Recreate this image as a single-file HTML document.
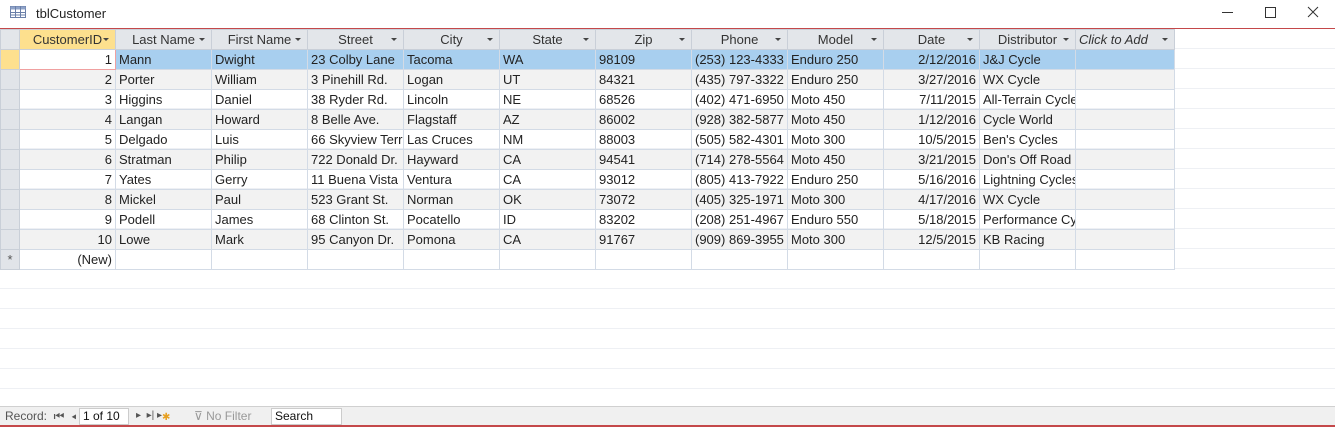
<!DOCTYPE html><html><head><style>
body{margin:0;width:1335px;height:428px;background:#fff;font-family:"Liberation Sans",sans-serif;font-size:13px;color:#222;position:relative;overflow:hidden}
.title{position:absolute;left:0;top:0;width:1335px;height:28px;border-bottom:1px solid #c4484a}
.title span{position:absolute;left:36px;top:6px;font-size:13px}
.grid{position:absolute;left:0;top:29px;width:1335px;height:377px;
background-image:linear-gradient(#eef0f4 1px,transparent 1px);background-size:100% 20px;background-position:0 19px}
table{position:absolute;left:0;top:29px;border-collapse:collapse;table-layout:fixed;width:1174px}
td{height:19px;padding:0 3px;border:1px solid #d3dbe6;white-space:nowrap;overflow:hidden;font-size:13px;line-height:19px}
tr.h td{background:#e3e6ea;border-color:#c9cfd8;color:#333;text-align:center;position:relative}
tr.h td:after{content:"";position:absolute;right:6px;top:8px;border:3px solid transparent;border-top:3px solid #444}
tr.h td.s:after{display:none}
tr.h td.id{background:#fde08e}
td.sel{background:#e1e4e9;padding:0;border-color:#c9cfd8}
tr:nth-child(odd):not(.h) td{background:#f2f2f2}
tr:nth-child(odd):not(.h) td.sel{background:#e1e4e9}
tr.a td{background:#a8cfef!important}
tr.a td.sel{background:#fde08e!important}
tr.a td.first{background:#fff!important;border:1px solid #f0a0a0}
td.n{text-align:right}
.status{position:absolute;left:0;top:406px;width:1335px;height:18px;background:#f0f0f0;border-top:1px solid #d0d0d0;border-bottom:2px solid #c4484a;font-size:12px;color:#555}
.status span{position:absolute;top:2px}
.box{position:absolute;top:1px;height:15px;background:#fff;border:1px solid #ccc;color:#111;padding-left:3px;line-height:15px}
</style></head><body>
<div class="title"><svg style="position:absolute;left:10px;top:6px" width="16" height="12"><rect x="0.5" y="0.5" width="15" height="11" fill="#fff" stroke="#6a7fa8"/><rect x="0.5" y="0.5" width="15" height="3" fill="#8ea2c8"/><path d="M5.5 0v12M10.5 0v12M0 6.5h16M0 9h16" stroke="#6a7fa8"/></svg><span>tblCustomer</span>
<svg style="position:absolute;left:1216px;top:6px" width="110" height="14"><path d="M6 6.5h11" stroke="#333"/><rect x="49.5" y="1.5" width="10" height="10" fill="none" stroke="#333"/><path d="M92 1l10 10M102 1l-10 10" stroke="#333"/></svg></div>
<div class="grid"></div>
<table>
<colgroup><col style="width:19px"><col style="width:96px"><col style="width:96px"><col style="width:96px"><col style="width:96px"><col style="width:96px"><col style="width:96px"><col style="width:96px"><col style="width:96px"><col style="width:96px"><col style="width:96px"><col style="width:96px"><col style="width:99px"></colgroup>
<tr class="h"><td class="sel s"></td><td class="id">CustomerID</td><td>Last Name</td><td>First Name</td><td>Street</td><td>City</td><td>State</td><td>Zip</td><td>Phone</td><td>Model</td><td>Date</td><td>Distributor</td><td style="font-style:italic;text-align:left">Click to Add</td></tr>
<tr class="a"><td class="sel"></td><td class="n first">1</td><td>Mann</td><td>Dwight</td><td>23 Colby Lane</td><td>Tacoma</td><td>WA</td><td>98109</td><td>(253) 123-4333</td><td>Enduro 250</td><td class="n">2/12/2016</td><td>J&amp;J Cycle</td><td></td></tr>
<tr><td class="sel"></td><td class="n">2</td><td>Porter</td><td>William</td><td>3 Pinehill Rd.</td><td>Logan</td><td>UT</td><td>84321</td><td>(435) 797-3322</td><td>Enduro 250</td><td class="n">3/27/2016</td><td>WX Cycle</td><td></td></tr>
<tr><td class="sel"></td><td class="n">3</td><td>Higgins</td><td>Daniel</td><td>38 Ryder Rd.</td><td>Lincoln</td><td>NE</td><td>68526</td><td>(402) 471-6950</td><td>Moto 450</td><td class="n">7/11/2015</td><td>All-Terrain Cycles</td><td></td></tr>
<tr><td class="sel"></td><td class="n">4</td><td>Langan</td><td>Howard</td><td>8 Belle Ave.</td><td>Flagstaff</td><td>AZ</td><td>86002</td><td>(928) 382-5877</td><td>Moto 450</td><td class="n">1/12/2016</td><td>Cycle World</td><td></td></tr>
<tr><td class="sel"></td><td class="n">5</td><td>Delgado</td><td>Luis</td><td>66 Skyview Terrace</td><td>Las Cruces</td><td>NM</td><td>88003</td><td>(505) 582-4301</td><td>Moto 300</td><td class="n">10/5/2015</td><td>Ben's Cycles</td><td></td></tr>
<tr><td class="sel"></td><td class="n">6</td><td>Stratman</td><td>Philip</td><td>722 Donald Dr.</td><td>Hayward</td><td>CA</td><td>94541</td><td>(714) 278-5564</td><td>Moto 450</td><td class="n">3/21/2015</td><td>Don's Off Road</td><td></td></tr>
<tr><td class="sel"></td><td class="n">7</td><td>Yates</td><td>Gerry</td><td>11 Buena Vista</td><td>Ventura</td><td>CA</td><td>93012</td><td>(805) 413-7922</td><td>Enduro 250</td><td class="n">5/16/2016</td><td>Lightning Cycles</td><td></td></tr>
<tr><td class="sel"></td><td class="n">8</td><td>Mickel</td><td>Paul</td><td>523 Grant St.</td><td>Norman</td><td>OK</td><td>73072</td><td>(405) 325-1971</td><td>Moto 300</td><td class="n">4/17/2016</td><td>WX Cycle</td><td></td></tr>
<tr><td class="sel"></td><td class="n">9</td><td>Podell</td><td>James</td><td>68 Clinton St.</td><td>Pocatello</td><td>ID</td><td>83202</td><td>(208) 251-4967</td><td>Enduro 550</td><td class="n">5/18/2015</td><td>Performance Cycles</td><td></td></tr>
<tr><td class="sel"></td><td class="n">10</td><td>Lowe</td><td>Mark</td><td>95 Canyon Dr.</td><td>Pomona</td><td>CA</td><td>91767</td><td>(909) 869-3955</td><td>Moto 300</td><td class="n">12/5/2015</td><td>KB Racing</td><td></td></tr>
<tr style="background:#fff"><td class="sel" style="text-align:center;color:#555">*</td><td class="n">(New)</td><td></td><td></td><td></td><td></td><td></td><td></td><td></td><td></td><td></td><td></td><td></td></tr>
</table>
<div class="status"><span style="left:5px">Record: &nbsp;⏮ &nbsp;◂</span><div class="box" style="left:79px;width:45px">1 of 10</div><span style="left:136px;font-size:10px;top:3px">▸ &nbsp;▸| ▸<span style="color:#e8a020">✱</span></span><span style="left:194px;color:#999">⊽ No Filter</span><div class="box" style="left:271px;width:66px">Search</div></div>
</body></html>
